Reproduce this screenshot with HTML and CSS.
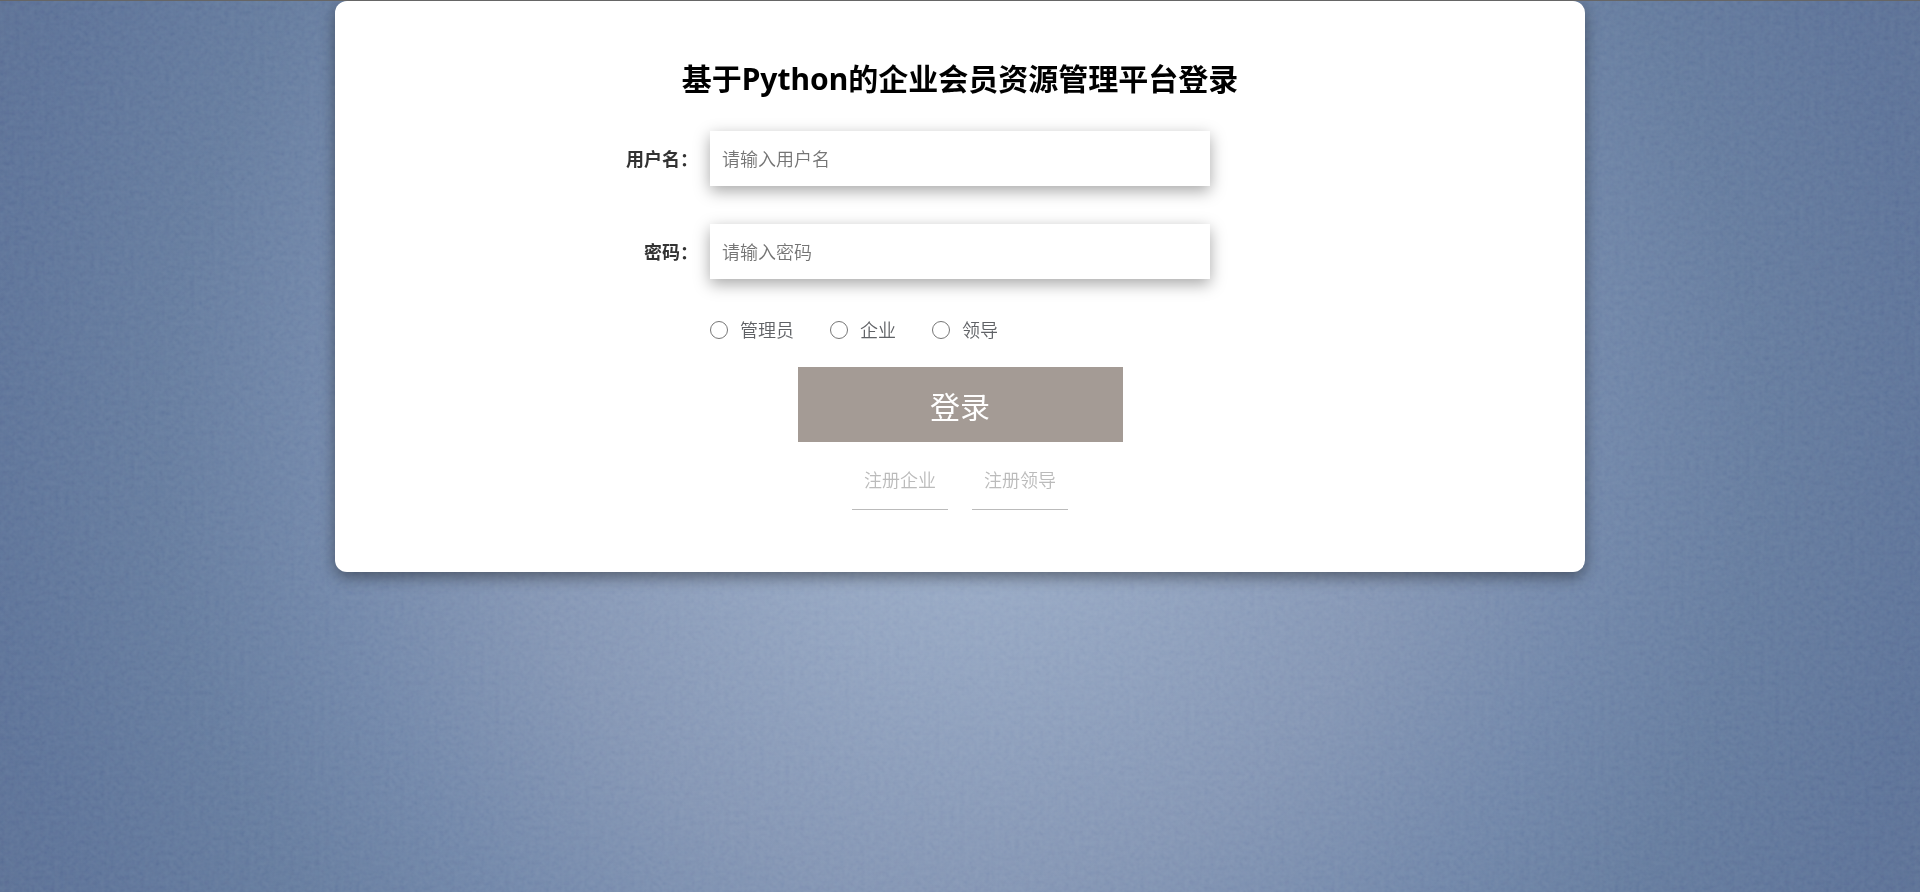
FILE: index.html
```html
<!DOCTYPE html>
<html lang="zh-CN">
<head>
  <meta charset="UTF-8" />
  <title>登录</title>
  <meta name="viewport" content="width=device-width, initial-scale=1.0" />
  <link rel="stylesheet" href="styles.css">
</head>
<body>

  <svg class="grain" aria-hidden="true">
    <filter id="grain">
      <feTurbulence type="fractalNoise" baseFrequency="0.2" numOctaves="2" seed="3" />
      <feColorMatrix type="saturate" values="0.2" />
      <feComponentTransfer>
        <feFuncA type="linear" slope="0" intercept="1" />
      </feComponentTransfer>
    </filter>
    <rect width="100%" height="100%" filter="url(#grain)" />
  </svg>

  <main class="container">
    <form class="login-form">
      <h2 class="title">基于Python的企业会员资源管理平台登录</h2>

      <div class="row">
        <label class="row-label" for="username">用户名：</label>
        <input class="text-input" type="text" id="username" name="username" placeholder="请输入用户名" />
      </div>

      <div class="row">
        <label class="row-label" for="password">密码：</label>
        <input class="text-input" type="password" id="password" name="password" placeholder="请输入密码" />
      </div>

      <div class="row row-roles">
        <div class="roles">
          <label class="role"><input type="radio" name="role" value="admin" />管理员</label>
          <label class="role"><input type="radio" name="role" value="company" />企业</label>
          <label class="role"><input type="radio" name="role" value="leader" />领导</label>
        </div>
      </div>

      <button class="login-btn" type="submit">登录</button>

      <div class="links">
        <a href="#company">注册企业</a>
        <a href="#leader">注册领导</a>
      </div>
    </form>
  </main>

</body>
</html>
```

FILE: styles.css
```css
* {
  box-sizing: border-box;
}
body {
  margin: 0;
  min-height: 100vh;
  border-top: 1px solid #666;
  font-family: "Noto Sans", "Noto Sans CJK SC", sans-serif;
  font-size: 18px;
  font-weight: 350;
  line-height: 26px;
  color: #606266;
  background: radial-gradient(circle at 50% 50%, #9badc8 0, #95a7c3 130px, #8193b2 446px, #6e84a7 640px, #62799c 800px, #5a7096 980px, #596e93 1060px);
}
.grain {
  position: fixed;
  top: 1px;
  left: 0;
  width: 100%;
  height: 100%;
  opacity: 0.25;
  mix-blend-mode: soft-light;
  pointer-events: none;
}
.container {
  position: relative;
  width: 94%;
  max-width: 1250px;
  margin: 0 auto;
  padding: 56px 20px 62px;
  background: #fff;
  border-radius: 12px;
  box-shadow: 0 5px 15px rgba(0, 0, 0, 0.4);
}
.login-form {
  display: flex;
  flex-direction: column;
  align-items: center;
}
.title {
  margin: 0 0 30px;
  font-size: 30px;
  font-weight: 700;
  line-height: 44px;
  color: #000;
}
.row {
  display: grid;
  grid-template-columns: 1fr minmax(0, 500px) 1fr;
  column-gap: 12px;
  align-items: center;
  width: 100%;
  margin-bottom: 38px;
}
.row-roles {
  margin-bottom: 24px;
}
.row-label {
  text-align: right;
  font-weight: 700;
  color: #333;
}
.text-input {
  width: 100%;
  height: 55px;
  padding: 0 12px;
  border: none;
  outline: none;
  font: inherit;
  color: #333;
  background: #fff;
  box-shadow: 0 5px 15px rgba(0, 0, 0, 0.35);
}
.text-input::placeholder {
  color: #757575;
}
.roles {
  grid-column: 2;
  display: flex;
  flex-wrap: wrap;
  gap: 36px;
}
.role {
  display: flex;
  align-items: center;
  gap: 12px;
}
.role input {
  width: 18px;
  height: 18px;
  margin: 0;
}
.login-btn {
  width: 325px;
  max-width: 100%;
  height: 75px;
  border: none;
  font-family: inherit;
  font-size: 30px;
  font-weight: 400;
  color: #fff;
  background: #a49b95;
  cursor: pointer;
}
.links {
  display: flex;
  gap: 24px;
  margin-top: 25px;
}
.links a {
  padding: 0 12px 16px;
  border-bottom: 1px solid #bbb;
  color: #bbb;
  text-decoration: none;
}
```
